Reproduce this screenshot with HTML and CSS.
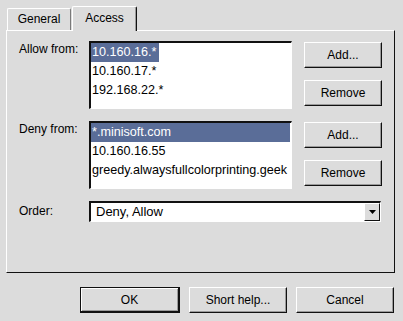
FILE: index.html
```html
<!DOCTYPE html>
<html lang="en">

<head>
    <meta charset="UTF-8">
    <title>Access</title>
    <link rel="stylesheet" href="styles.css">
</head>

<body>
    <div class="tabs">
        <div class="tab">General</div>
        <div class="tab active">Access</div>
    </div>

    <div class="panel">
        <div class="label">Allow from:</div>
        <div class="listbox">
            <div class="item"><span class="sel">10.160.16.*</span></div>
            <div class="item">10.160.17.*</div>
            <div class="item">192.168.22.*</div>
        </div>
        <div class="side">
            <button class="btn">Add...</button>
            <button class="btn">Remove</button>
        </div>

        <div class="label">Deny from:</div>
        <div class="listbox">
            <div class="item selected">*.minisoft.com</div>
            <div class="item">10.160.16.55</div>
            <div class="item">greedy.alwaysfullcolorprinting.geek</div>
        </div>
        <div class="side">
            <button class="btn">Add...</button>
            <button class="btn">Remove</button>
        </div>

        <div class="label order">Order:</div>
        <div class="combo">
            <div class="combo-text">Deny, Allow</div>
            <div class="combo-arrow">
                <svg width="9" height="7" viewBox="0 0 9 7"><path d="M1 1h7l-3.5 4z" fill="#000"/></svg>
            </div>
        </div>
    </div>

    <div class="footer">
        <button class="btn big default">OK</button>
        <button class="btn big">Short help...</button>
        <button class="btn big">Cancel</button>
    </div>
</body>

</html>
```

FILE: styles.css
```css
body {
    margin: 0;
    padding-top: 6px;
    background: #dcdcdc;
    font-family: "Liberation Sans", Arial, sans-serif;
    font-size: 12px;
    color: #000;
}

.tabs {
    display: flex;
    align-items: flex-end;
    height: 24px;
    margin-left: 7px;
}

.tab {
    box-sizing: border-box;
    width: 64px;
    height: 22px;
    line-height: 21px;
    text-align: center;
    border-top: 1px solid #fff;
    border-left: 1px solid #fff;
    border-right: 1px solid #7a7a7a;
    border-radius: 2px 2px 0 0;
    background: #dcdcdc;
}

.tab.active {
    position: relative;
    z-index: 1;
    width: 65px;
    height: 25px;
    margin-left: 1px;
    margin-bottom: -1px;
    line-height: 22px;
    border-right: 1px solid #111;
    box-shadow: inset -1px 0 #9a9a9a;
}

.panel {
    box-sizing: border-box;
    width: 389px;
    height: 243px;
    margin-left: 6px;
    padding: 10px 0 0 12px;
    border-top: 1px solid #fff;
    border-left: 1px solid #fff;
    border-right: 1px solid #111;
    border-bottom: 1px solid #111;
    display: grid;
    grid-template-columns: 70px 203px 78px;
    grid-auto-rows: min-content;
    column-gap: 0;
    row-gap: 12px;
}

.label {
    padding-top: 1px;
    line-height: 14px;
}

.label.order {
    padding-top: 0;
    line-height: 21px;
}

.listbox {
    box-sizing: border-box;
    height: 68px;
    background: #fff;
    border-top: 2px solid #111;
    border-left: 2px solid #111;
    border-right: 1px solid #fff;
    border-bottom: 1px solid #fff;
    font-size: 12.6px;
    overflow: hidden;
}

.item {
    height: 19px;
    line-height: 19px;
    padding-left: 1px;
    white-space: nowrap;
}

.item .sel {
    display: inline-block;
    padding: 0 3px 0 1px;
    margin-left: -1px;
    background: #5a6d98;
    color: #fff;
}

.item.selected {
    margin-right: 1px;
    background: #5a6d98;
    color: #fff;
}

.side {
    grid-column: 3;
    margin-left: 12px;
    width: 78px;
    padding-top: 1px;
    display: flex;
    flex-direction: column;
    gap: 12px;
}

.btn {
    box-sizing: border-box;
    width: 78px;
    height: 26px;
    padding: 0;
    background: #dcdcdc;
    font-family: "Liberation Sans", Arial, sans-serif;
    font-size: 12px;
    color: #000;
    border-top: 1px solid #fff;
    border-left: 1px solid #fff;
    border-right: 1px solid #111;
    border-bottom: 1px solid #111;
    box-shadow: inset -1px -1px #9a9a9a;
}

.combo {
    grid-column: 2 / 4;
    box-sizing: border-box;
    width: 292px;
    height: 21px;
    display: flex;
    background: #fff;
    border-top: 2px solid #111;
    border-left: 2px solid #111;
    border-right: 1px solid #fff;
    border-bottom: 1px solid #fff;
}

.combo-text {
    flex: 1;
    padding-left: 5px;
    font-size: 13px;
    line-height: 18px;
}

.combo-arrow {
    box-sizing: border-box;
    width: 16px;
    display: flex;
    align-items: center;
    justify-content: center;
    background: #dcdcdc;
    border-top: 1px solid #fff;
    border-left: 1px solid #fff;
    border-right: 1px solid #111;
    border-bottom: 1px solid #111;
}

.footer {
    display: flex;
    justify-content: flex-end;
    gap: 9px;
    width: 394px;
    padding-top: 14px;
}

.btn.big {
    width: 98px;
}

.btn.default {
    width: 100px;
    border: 1px solid #111;
    border-right-width: 2px;
    border-bottom-width: 2px;
    box-shadow: inset 1px 1px #fff, inset -1px -1px #9a9a9a;
}
```
